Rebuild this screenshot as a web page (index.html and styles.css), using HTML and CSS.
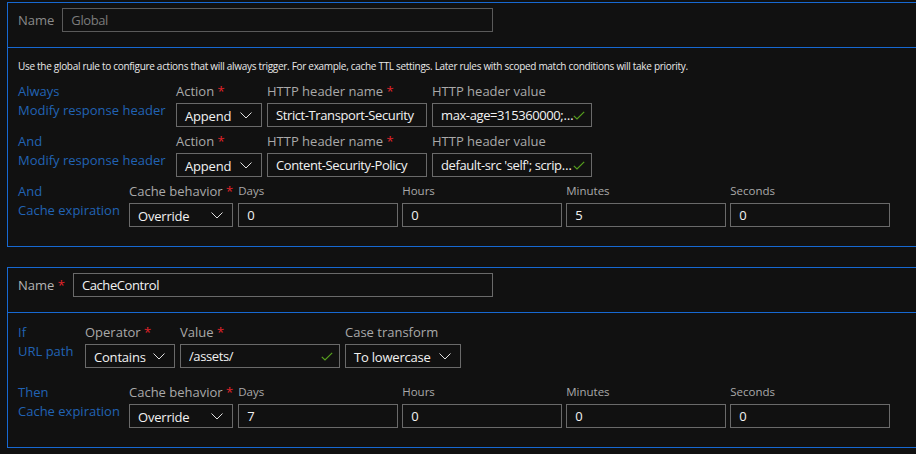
FILE: index.html
```html
<!DOCTYPE html>
<html lang="en">
<head>
  <meta charset="UTF-8">
  <title>Rules engine</title>
  <link rel="stylesheet" href="styles.css">
</head>
<body>

  <!-- Global rule -->
  <div class="card">
    <div class="name-row">
      <label class="name-label disabled">Name</label>
      <input class="text-input name-input name-global" type="text" value="Global" disabled>
    </div>
    <div class="card-body">
      <p class="desc">Use the global rule to configure actions that will always trigger. For example, cache TTL settings. Later rules with scoped match conditions will take priority.</p>

      <div class="rule-row">
        <div class="cond cond-wide"><span>Always</span><span>Modify response header</span></div>
        <div class="fields">
          <div class="field">
            <label>Action <span class="req">*</span></label>
            <div class="select w-action">Append <svg width="12" height="7" viewBox="0 0 12 7"><polyline points="0.5,0.5 6,6 11.5,0.5" fill="none" stroke="#e0e0e0" stroke-width="1"/></svg></div>
          </div>
          <div class="field">
            <label>HTTP header name <span class="req">*</span></label>
            <input class="text-input w-text" type="text" value="Strict-Transport-Security">
          </div>
          <div class="field">
            <label>HTTP header value</label>
            <div class="checked">
              <input class="text-input w-text has-check" type="text" value="max-age=315360000; includeSubDomains; preload">
              <svg class="check" width="12" height="9" viewBox="0 0 12 9"><polyline points="0.8,4.8 4,8 11.2,0.8" fill="none" stroke="#57a01e" stroke-width="1.2"/></svg>
            </div>
          </div>
        </div>
      </div>

      <div class="rule-row">
        <div class="cond cond-wide"><span>And</span><span>Modify response header</span></div>
        <div class="fields">
          <div class="field">
            <label>Action <span class="req">*</span></label>
            <div class="select w-action">Append <svg width="12" height="7" viewBox="0 0 12 7"><polyline points="0.5,0.5 6,6 11.5,0.5" fill="none" stroke="#e0e0e0" stroke-width="1"/></svg></div>
          </div>
          <div class="field">
            <label>HTTP header name <span class="req">*</span></label>
            <input class="text-input w-text" type="text" value="Content-Security-Policy">
          </div>
          <div class="field">
            <label>HTTP header value</label>
            <div class="checked">
              <input class="text-input w-text has-check" type="text" value="default-src 'self'; script-src 'self'">
              <svg class="check" width="12" height="9" viewBox="0 0 12 9"><polyline points="0.8,4.8 4,8 11.2,0.8" fill="none" stroke="#57a01e" stroke-width="1.2"/></svg>
            </div>
          </div>
        </div>
      </div>

      <div class="rule-row">
        <div class="cond cond-mid"><span>And</span><span>Cache expiration</span></div>
        <div class="fields">
          <div class="field">
            <label>Cache behavior <span class="req">*</span></label>
            <div class="select w-cache">Override <svg width="12" height="7" viewBox="0 0 12 7"><polyline points="0.5,0.5 6,6 11.5,0.5" fill="none" stroke="#e0e0e0" stroke-width="1"/></svg></div>
          </div>
          <div class="time-fields">
            <div class="field"><label class="small">Days</label><input class="text-input w-time" type="text" value="0"></div>
            <div class="field"><label class="small">Hours</label><input class="text-input w-time" type="text" value="0"></div>
            <div class="field"><label class="small">Minutes</label><input class="text-input w-time" type="text" value="5"></div>
            <div class="field"><label class="small">Seconds</label><input class="text-input w-time" type="text" value="0"></div>
          </div>
        </div>
      </div>
    </div>
  </div>

  <!-- CacheControl rule -->
  <div class="card">
    <div class="name-row">
      <label class="name-label">Name <span class="req">*</span></label>
      <input class="text-input name-input" type="text" value="CacheControl">
    </div>
    <div class="card-body tight">
      <div class="rule-row">
        <div class="cond cond-narrow"><span>If</span><span>URL path</span></div>
        <div class="fields">
          <div class="field">
            <label>Operator <span class="req">*</span></label>
            <div class="select w-operator">Contains <svg width="12" height="7" viewBox="0 0 12 7"><polyline points="0.5,0.5 6,6 11.5,0.5" fill="none" stroke="#e0e0e0" stroke-width="1"/></svg></div>
          </div>
          <div class="field">
            <label>Value <span class="req">*</span></label>
            <div class="checked">
              <input class="text-input w-text has-check" type="text" value="/assets/">
              <svg class="check" width="12" height="9" viewBox="0 0 12 9"><polyline points="0.8,4.8 4,8 11.2,0.8" fill="none" stroke="#57a01e" stroke-width="1.2"/></svg>
            </div>
          </div>
          <div class="field">
            <label>Case transform</label>
            <div class="select w-case">To lowercase <svg width="12" height="7" viewBox="0 0 12 7"><polyline points="0.5,0.5 6,6 11.5,0.5" fill="none" stroke="#e0e0e0" stroke-width="1"/></svg></div>
          </div>
        </div>
      </div>

      <div class="rule-row">
        <div class="cond cond-mid"><span>Then</span><span>Cache expiration</span></div>
        <div class="fields">
          <div class="field">
            <label>Cache behavior <span class="req">*</span></label>
            <div class="select w-cache">Override <svg width="12" height="7" viewBox="0 0 12 7"><polyline points="0.5,0.5 6,6 11.5,0.5" fill="none" stroke="#e0e0e0" stroke-width="1"/></svg></div>
          </div>
          <div class="time-fields">
            <div class="field"><label class="small">Days</label><input class="text-input w-time" type="text" value="7"></div>
            <div class="field"><label class="small">Hours</label><input class="text-input w-time" type="text" value="0"></div>
            <div class="field"><label class="small">Minutes</label><input class="text-input w-time" type="text" value="0"></div>
            <div class="field"><label class="small">Seconds</label><input class="text-input w-time" type="text" value="0"></div>
          </div>
        </div>
      </div>
    </div>
  </div>

</body>
</html>
```

FILE: styles.css
```css
* {
  box-sizing: border-box;
}

body {
  margin: 0;
  background: #111111;
  color: #f0f0f0;
  font-family: 'Open Sans', 'Noto Sans', sans-serif;
  font-size: 13px;
  overflow: hidden;
}

/* Rule cards */
.card {
  margin: 2px 0 20px 7px;
  border: 1px solid #1769d2;
  border-right: none;
}

.name-row {
  display: flex;
  align-items: center;
  padding: 5px 10px 15px;
}

.name-label {
  color: #b4b4b4;
  margin-right: 8px;
  line-height: 24px;
}

.name-label.disabled {
  color: #8a8a8a;
}

.name-input {
  width: 420px;
}

.name-global {
  width: 431px;
}

.card-body {
  border-top: 1px solid #1769d2;
  padding: 11px 10px 19px;
}

.card-body.tight {
  padding-top: 9px;
}

.card-body.tight .rule-row + .rule-row {
  margin-top: 14px;
}

.desc {
  margin: 0 0 8px;
  font-size: 10px;
  line-height: 14px;
  letter-spacing: -0.3px;
  color: #e8e8e8;
}

/* Rows */
.rule-row {
  display: flex;
  gap: 10px;
}

.rule-row + .rule-row {
  margin-top: 4px;
}

.cond {
  display: flex;
  flex-direction: column;
  padding-top: 1px;
  color: #2163b4;
  line-height: 19px;
  white-space: nowrap;
}

.cond-wide { width: 148px; }
.cond-mid { width: 101px; }
.cond-narrow { width: 57px; }

.fields, .time-fields {
  display: flex;
  gap: 5px;
}

.time-fields {
  gap: 4px;
}

.field label {
  display: block;
  color: #a9a9a9;
  line-height: 20px;
  margin-bottom: 2px;
  white-space: nowrap;
}

.field label.small {
  font-size: 11.5px;
}

.req {
  color: #e3242b;
}

/* Inputs */
.text-input {
  height: 24px;
  padding: 0 8px;
  border: 1px solid #6a6a6a;
  background: transparent;
  color: #f2f2f2;
  font-family: inherit;
  font-size: 13px;
  letter-spacing: -0.4px;
  text-overflow: ellipsis;
  outline: none;
}

.text-input:disabled {
  color: #7c7c7c;
  border-color: #5a5a5a;
}

.w-text { width: 160px; }
.w-time { width: 160px; }

.checked {
  position: relative;
}

.has-check {
  padding-right: 15px;
}

.check {
  position: absolute;
  right: 7px;
  top: 8px;
}

.select {
  display: flex;
  align-items: center;
  justify-content: space-between;
  height: 24px;
  padding: 1px 9px 0 8px;
  border: 1px solid #6a6a6a;
  color: #f2f2f2;
  letter-spacing: -0.2px;
  white-space: nowrap;
  cursor: pointer;
}

.w-action { width: 86px; }
.w-cache { width: 104px; }
.w-operator { width: 90px; }
.w-case { width: 116px; }
```
